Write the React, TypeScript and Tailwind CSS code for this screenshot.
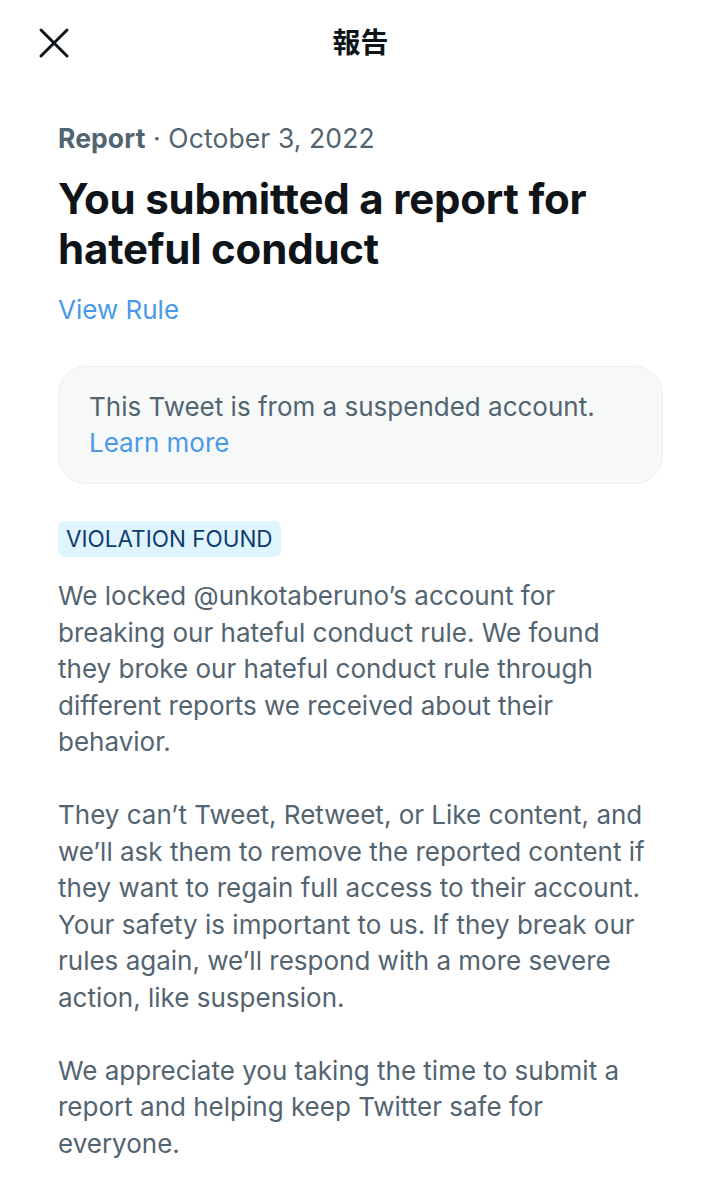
import React from 'react';

const font = { fontFamily: 'Inter, "Noto Sans CJK JP", sans-serif' };

const paragraphs: string[][] = [
  [
    'We locked @unkotaberuno’s account for',
    'breaking our hateful conduct rule. We found',
    'they broke our hateful conduct rule through',
    'different reports we received about their',
    'behavior.',
  ],
  [
    'They can’t Tweet, Retweet, or Like content, and',
    'we’ll ask them to remove the reported content if',
    'they want to regain full access to their account.',
    'Your safety is important to us. If they break our',
    'rules again, we’ll respond with a more severe',
    'action, like suspension.',
  ],
  [
    'We appreciate you taking the time to submit a',
    'report and helping keep Twitter safe for',
    'everyone.',
  ],
];

const CloseIcon: React.FC = () => (
  <svg width="32" height="32" viewBox="0 0 32 32" fill="none">
    <path d="M3 3L29 29M29 3L3 29" stroke="#0f1419" strokeWidth="3" strokeLinecap="round" />
  </svg>
);

export default function App() {
  return (
    <div className="w-[721px] h-[1200px] bg-white overflow-hidden text-[#536471]" style={font}>
      {/* Header */}
      <div className="relative h-[86px] flex items-center justify-center">
        <button className="absolute left-[38px] top-[27px]">
          <CloseIcon />
        </button>
        <h1 className="text-[28px] font-bold text-[#0f1419]">報告</h1>
      </div>

      <div className="px-[58px] pt-[34px]">
        {/* Meta */}
        <div className="text-[26.5px] leading-[36px] tracking-[0.1px]">
          <span className="font-bold">Report</span> · October 3, 2022
        </div>

        {/* Title */}
        <h2 className="mt-[18px] text-[42px] leading-[50px] font-bold text-[#0f1419] tracking-[-0.2px]">
          You submitted a report for
          <br />
          hateful conduct
        </h2>

        <a className="block mt-[18px] text-[26px] leading-[36px] text-[#4a99e9]">View Rule</a>

        {/* Card */}
        <div className="mt-[38px] w-[605px] rounded-[28px] bg-[#f7f9f9] border border-[#eceff1] px-[30px] py-[22px] text-[26px] leading-[36px]">
          <div>This Tweet is from a suspended account.</div>
          <a className="text-[#4a99e9]">Learn more</a>
        </div>

        {/* Badge */}
        <div className="mt-[37px] inline-flex items-center h-[36px] px-[8px] rounded-[7px] bg-[#dff5fd] text-[#0f3c6e] text-[22.5px]">
          VIOLATION FOUND
        </div>

        {/* Body */}
        <div className="mt-[21px] flex flex-col gap-[36.5px] text-[26px] leading-[36.5px]">
          {paragraphs.map((lines, i) => (
            <p key={i}>
              {lines.map((line, j) => (
                <span key={j} className="block whitespace-nowrap">
                  {line}
                </span>
              ))}
            </p>
          ))}
        </div>
      </div>
    </div>
  );
}
